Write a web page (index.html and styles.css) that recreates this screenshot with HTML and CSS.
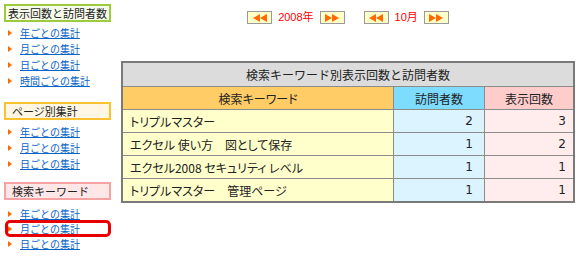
FILE: index.html
```html
<!DOCTYPE html>
<html lang="ja">
<head>
<meta charset="utf-8">
<title>アクセス集計</title>
<link rel="stylesheet" href="styles.css">
</head>
<body>
<div class="page">
  <aside class="side">
    <div class="sec sec-green">表示回数と訪問者数</div>
    <ul class="links links-first">
      <li><a href="#">年ごとの集計</a></li>
      <li><a href="#">月ごとの集計</a></li>
      <li><a href="#">日ごとの集計</a></li>
      <li><a href="#">時間ごとの集計</a></li>
    </ul>
    <div class="sec sec-orange">ページ別集計</div>
    <ul class="links links-mid">
      <li><a href="#">年ごとの集計</a></li>
      <li><a href="#">月ごとの集計</a></li>
      <li><a href="#">日ごとの集計</a></li>
    </ul>
    <div class="sec sec-pink">検索キーワード</div>
    <ul class="links links-last">
      <li><a href="#">年ごとの集計</a></li>
      <li class="marked"><a href="#">月ごとの集計</a></li>
      <li><a href="#">日ごとの集計</a></li>
    </ul>
  </aside>
  <main class="main">
    <div class="nav">
      <div class="nav-group">
        <span class="btn"><svg width="14" height="8" viewBox="0 0 14 8"><polygon points="7,0 0,4 7,8"/><polygon points="14,0 7,4 14,8"/></svg></span>
        <span class="nav-label">2008年</span>
        <span class="btn"><svg width="14" height="8" viewBox="0 0 14 8"><polygon points="0,0 7,4 0,8"/><polygon points="7,0 14,4 7,8"/></svg></span>
      </div>
      <div class="nav-group">
        <span class="btn"><svg width="14" height="8" viewBox="0 0 14 8"><polygon points="7,0 0,4 7,8"/><polygon points="14,0 7,4 14,8"/></svg></span>
        <span class="nav-label">10月</span>
        <span class="btn"><svg width="14" height="8" viewBox="0 0 14 8"><polygon points="0,0 7,4 0,8"/><polygon points="7,0 14,4 7,8"/></svg></span>
      </div>
    </div>
    <table class="stats">
      <colgroup>
        <col class="c-key"><col class="c-vis"><col class="c-view">
      </colgroup>
      <tr class="title-row"><th colspan="3">検索キーワード別表示回数と訪問者数</th></tr>
      <tr class="head-row">
        <th class="h-key">検索キーワード</th>
        <th class="h-vis">訪問者数</th>
        <th class="h-view">表示回数</th>
      </tr>
      <tr><td class="d-key">トリプルマスター</td><td class="d-vis">2</td><td class="d-view">3</td></tr>
      <tr><td class="d-key">エクセル 使い方　図として保存</td><td class="d-vis">1</td><td class="d-view">2</td></tr>
      <tr><td class="d-key">エクセル2008 セキュリティ レベル</td><td class="d-vis">1</td><td class="d-view">1</td></tr>
      <tr><td class="d-key">トリプルマスター　管理ページ</td><td class="d-vis">1</td><td class="d-view">1</td></tr>
    </table>
  </main>
</div>
</body>
</html>
```

FILE: styles.css
```css
body {
  margin: 0;
  background: #fff;
  font-family: "Noto Sans CJK JP", "DejaVu Sans", sans-serif;
  color: #222;
}

.page {
  display: flex;
  gap: 10px;
  padding: 4px 5px 0 4px;
}

/* ---------- sidebar ---------- */
.side {
  width: 107px;
  flex: none;
}

.sec {
  height: 14px;
  line-height: 14px;
  border: 2px solid;
  font-size: 11px;
  padding-left: 6px;
  color: #222;
  white-space: nowrap;
}

.sec-green {
  border-color: #9ccc3c;
  background: #f6fbec;
  padding-left: 2px;
}

.sec-orange {
  border-color: #f9c230;
  background: #fff7e4;
}

.sec-pink {
  border-color: #f7a3a3;
  background: #ffe7e7;
}

.links {
  list-style: none;
  margin: 3px 0 13px;
  padding: 0;
}

.links-mid {
  margin: 4px 0 10px;
}

.links-last {
  margin: 6px 0 0;
}

.links li {
  display: flex;
  align-items: center;
  height: 16px;
  font-size: 10px;
  line-height: 16px;
}

.links-last li {
  height: 15px;
  line-height: 15px;
}

.links li::before {
  content: "";
  width: 0;
  height: 0;
  border-left: 4px solid #ff6a00;
  border-top: 3.5px solid transparent;
  border-bottom: 3.5px solid transparent;
  margin: 0 8px 0 4px;
}

.links a {
  color: #0a64c8;
  text-decoration: underline;
}

.links li.marked {
  position: relative;
}

.links li.marked::after {
  content: "";
  position: absolute;
  left: 1px;
  right: 0;
  top: -1px;
  bottom: -1px;
  border: 3px solid #e80000;
  border-radius: 5px;
}

/* ---------- main ---------- */
.main {
  flex: 1;
  min-width: 0;
}

.nav {
  display: flex;
  justify-content: center;
  align-items: center;
  gap: 19px;
  height: 13px;
  margin-top: 7px;
}

.nav-group {
  display: flex;
  align-items: center;
  gap: 6px;
}

.btn {
  display: flex;
  align-items: center;
  justify-content: center;
  width: 23px;
  height: 11px;
  border: 1px solid #9a9a9a;
  background: #ffffc8;
}

.btn svg {
  display: block;
  fill: #ff6a00;
}

.nav-label {
  font-family: "Liberation Sans", "Noto Sans CJK JP", sans-serif;
  font-size: 11px;
  color: #ff0000;
  line-height: 13px;
}

.stats {
  width: 100%;
  margin-top: 37px;
  border-collapse: collapse;
  border: 2px solid #7a7a7a;
  font-size: 12px;
  color: #222;
}

.c-key { width: 273px; }
.c-vis { width: 91px; }
.c-view { width: 90px; }

.stats th,
.stats td {
  border: 1px solid #8c8c8c;
  padding: 0;
  font-weight: normal;
}

.title-row th {
  height: 23px;
  background: #dcdcdc;
}

.head-row th {
  height: 22px;
  font-feature-settings: "palt";
}

.stats .h-key { background: #ffcc66; }
.stats .h-vis { background: #7edcff; }
.stats .h-view { background: #ffcccc; }

.stats td {
  height: 22px;
}

.stats .d-key {
  background: #ffffcc;
  padding-left: 7px;
  font-feature-settings: "palt";
}

.stats .d-vis,
.stats .d-view {
  text-align: right;
  padding-right: 11px;
  font-family: "DejaVu Sans", sans-serif;
}

.stats .d-vis { background: #dcf4ff; }
.stats .d-view {
  background: #ffeded;
  padding-right: 7px;
}
```
